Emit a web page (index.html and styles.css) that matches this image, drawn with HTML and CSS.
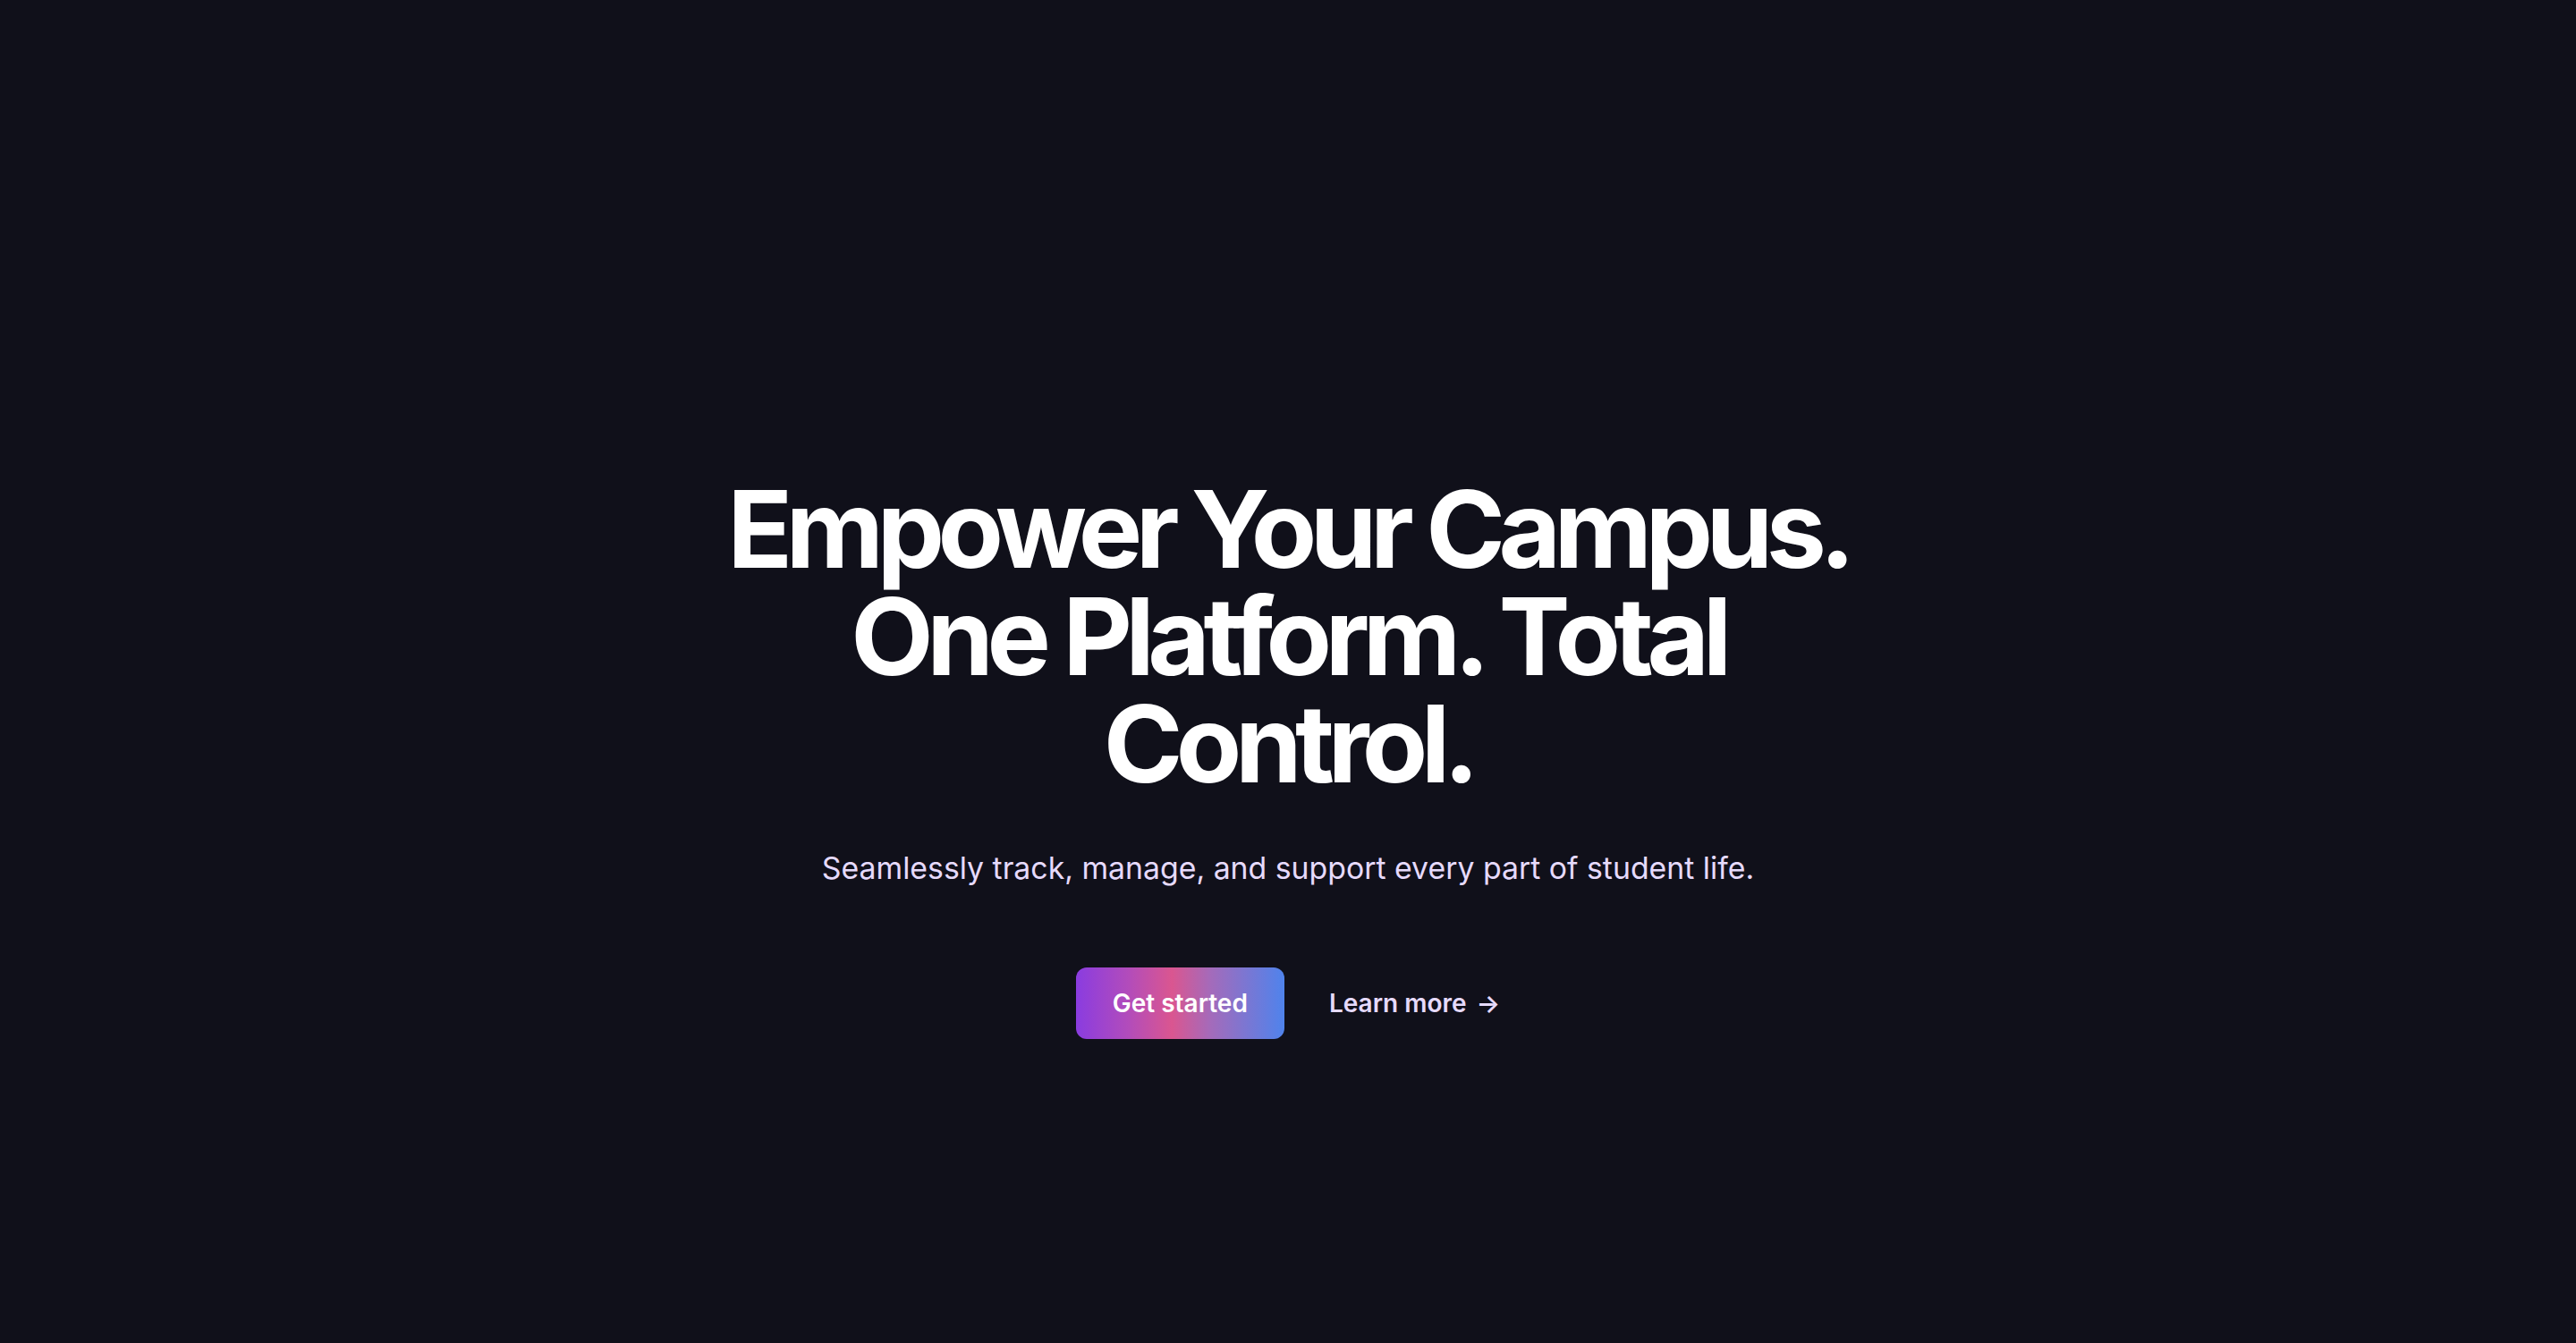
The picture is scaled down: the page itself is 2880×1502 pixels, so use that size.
FILE: index.html
```html
<!DOCTYPE html>
<html lang="en">
<head>
<meta charset="utf-8">
<title>Empower Your Campus</title>
<link rel="stylesheet" href="styles.css">
</head>
<body>
  <main class="hero">
    <div class="hero-inner">
      <h1 class="hero-title">Empower Your Campus. One Platform. Total Control.</h1>
      <p class="hero-sub">Seamlessly track, manage, and support every part of student life.</p>
      <div class="hero-actions">
        <a href="#" class="btn-primary">Get started</a>
        <a href="#" class="btn-link">Learn more <span class="arrow" aria-hidden="true">→</span></a>
      </div>
    </div>
  </main>
</body>
</html>
```

FILE: styles.css
```css
html, body {
  margin: 0;
  padding: 0;
  background: #10101a;
}
body {
  font-family: Inter, "Noto Sans", sans-serif;
  min-height: 1502px;
}
.hero {
  display: flex;
  justify-content: center;
  padding-top: 532px;
}
.hero-inner {
  max-width: 1300px;
  text-align: center;
  display: flex;
  flex-direction: column;
  align-items: center;
}
.hero-title {
  margin: 0;
  color: #ffffff;
  font-size: 120px;
  line-height: 120px;
  font-weight: 700;
  letter-spacing: -0.063em;
}
.hero-sub {
  margin: 55px 0 0;
  color: #e6dafc;
  font-size: 33.8px;
  line-height: 48px;
  font-weight: 400;
}
.hero-actions {
  margin-top: 87px;
  display: flex;
  align-items: center;
  gap: 50px;
}
.btn-primary {
  display: inline-block;
  padding: 20px 41px;
  font-size: 28px;
  line-height: 40px;
  font-weight: 600;
  color: #ffffff;
  text-decoration: none;
  border-radius: 12px;
  background: linear-gradient(90deg, #8a3ce0 0%, #b24cbb 25%, #da5690 46%, #a36bbb 65%, #4f83ec 100%);
}
.btn-link {
  font-size: 28px;
  line-height: 40px;
  font-weight: 600;
  color: #e6dafc;
  text-decoration: none;
}
.arrow {
  margin-left: 4px;
}
```
